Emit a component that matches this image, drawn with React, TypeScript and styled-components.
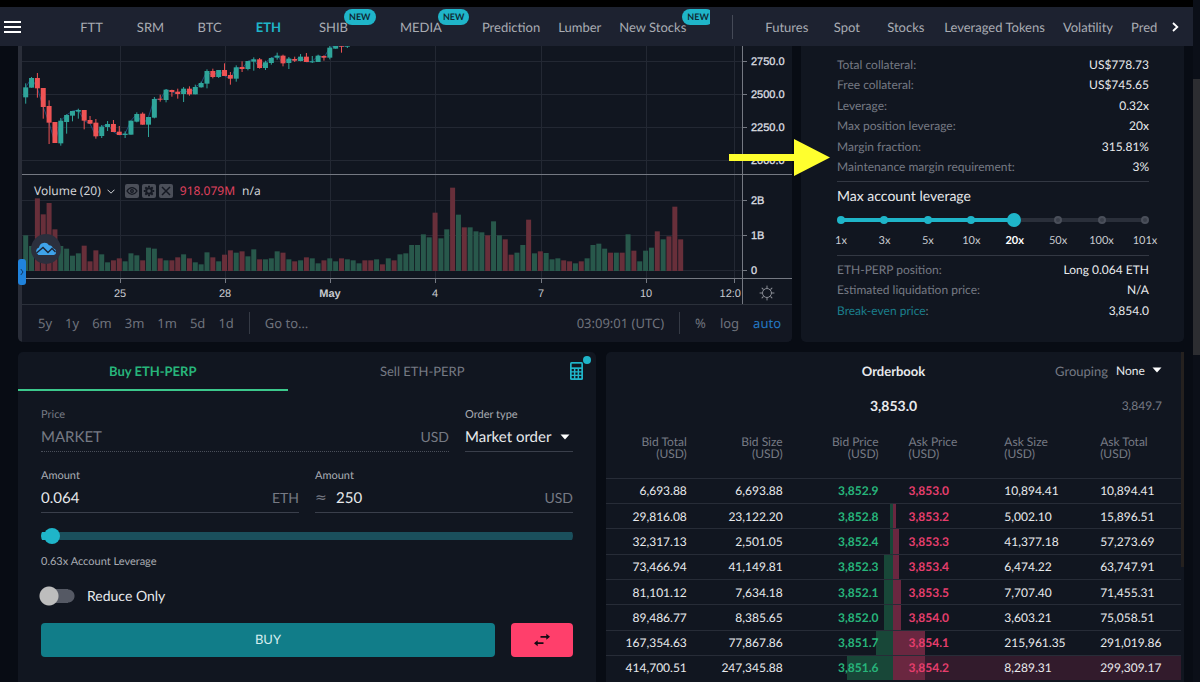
import React from "react";
import styled, { createGlobalStyle, css } from "styled-components";

const color = {
  page: "#080c14",
  panel: "#111620",
  nav: "#1d2230",
  line: "#272c37",
  text: "#e8eaed",
  soft: "#a9acb3",
  muted: "#767a84",
  teal: "#1fb5c9",
  green: "#27b57b",
  red: "#e63e6d",
};

const GlobalStyle = createGlobalStyle`
  * { box-sizing: border-box; }
  body {
    margin: 0;
    height: 100vh;
    overflow: hidden;
    background: ${color.page};
    color: ${color.text};
    font-family: Lato, "Liberation Sans", sans-serif;
    font-size: 13px;
    text-rendering: geometricPrecision;
  }
  button, input, select { font: inherit; color: inherit; text-rendering: inherit; }
`;

/* ---------- page frame ---------- */

const Page = styled.div`
  display: grid;
  grid-template-columns: minmax(0, 1fr) 7px;
  min-height: 100vh;
`;

const Content = styled.div`
  display: flex;
  flex-direction: column;
  border-top: 7px solid #000;
`;

const ScrollRail = styled.div`
  padding-top: 79px;
  background: #0b0f18;
`;

const ScrollThumb = styled.div`
  height: 276px;
  background: #2c2d31;
`;

const Panels = styled.main`
  flex: 1;
  display: flex;
  flex-direction: column;
  gap: 10px;
  padding: 0 9px 0 18px;
`;

const TopRow = styled.div`
  display: grid;
  grid-template-columns: minmax(0, 774fr) minmax(0, 383fr);
  gap: 9px;
`;

const BottomRow = styled.div`
  flex: 1;
  display: grid;
  grid-template-columns: minmax(0, 578fr) minmax(0, 578fr);
  gap: 10px;
`;

/* ---------- navigation ---------- */

const Nav = styled.nav`
  display: flex;
  align-items: center;
  height: 39px;
  background: ${color.nav};
`;

const IconButton = styled.button`
  display: flex;
  align-items: center;
  justify-content: center;
  padding: 0;
  border: 0;
  background: none;
  cursor: pointer;
`;

const MenuButton = styled(IconButton)`
  width: 24px;
  height: 39px;
`;

const NavGroup = styled.div<{ $grow?: boolean }>`
  display: flex;
  align-items: center;
  height: 39px;
  min-width: 0;
  overflow: hidden;
  ${(p) => (p.$grow ? css`flex: 1; padding-left: 23px;` : css`flex: none; padding: 0 15px 0 38px;`)}
`;

const NavLink = styled.a<{ $active?: boolean; $spaced?: boolean }>`
  flex: none;
  min-width: 59px;
  padding: 0 9px;
  margin: ${(p) => (p.$spaced ? "0 22px 0 6px" : "0")};
  color: ${(p) => (p.$active ? color.teal : color.soft)};
  font-weight: ${(p) => (p.$active ? 700 : 400)};
  line-height: 20px;
  text-align: center;
  text-decoration: none;
  white-space: nowrap;
`;

const NavName = styled.span`
  position: relative;
`;

const NewBadge = styled.span`
  position: absolute;
  top: -10px;
  left: calc(100% - 4px);
  padding: 0 5px;
  border-radius: 8px;
  background: ${color.teal};
  color: #0f2a35;
  font-size: 9px;
  font-weight: 700;
  line-height: 16px;
`;

const NavDivider = styled.div`
  width: 1px;
  height: 24px;
  margin-left: 22px;
  background: #454a57;
`;

const NextButton = styled(IconButton)`
  width: 36px;
  height: 39px;
`;

/* ---------- chart ---------- */

const ChartPanel = styled.section`
  position: relative;
  border-left: 4px solid #2a2e39;
  border-radius: 0 0 5px 5px;
  background: ${color.panel};
`;

const ChartSvg = styled.svg`
  display: block;
  width: 100%;
  aspect-ratio: 770 / 258;
  font-family: "Liberation Sans", sans-serif;
  font-size: 11px;
`;

const Legend = styled.div`
  position: absolute;
  top: 137px;
  left: 12px;
  display: flex;
  align-items: center;
  gap: 7px;
  font-family: "Noto Sans", sans-serif;
  font-size: 12px;
  line-height: 16px;
  color: #d0d2d6;
`;

const LegendName = styled.span`
  display: flex;
  align-items: center;
  gap: 6px;
  margin-right: 3px;
`;

const LegendTools = styled.span`
  display: flex;
  gap: 3px;
`;

const LegendTool = styled(IconButton)`
  width: 14px;
  height: 14px;
  border-radius: 2px;
  background: #4b4f59;
`;

const LegendValue = styled.span`
  color: #e0425f;
`;

const CloudBadge = styled.div`
  position: absolute;
  top: 188px;
  left: 9px;
  display: flex;
  align-items: center;
  justify-content: center;
  width: 30px;
  height: 30px;
  border-radius: 50%;
  background: #2b2f3d;
`;

const DrawerHandle = styled(IconButton)`
  position: absolute;
  top: 213px;
  left: -4px;
  width: 8px;
  height: 26px;
  border-radius: 3px;
  background: #2083dc;
`;

const ChartToolbar = styled.div`
  display: flex;
  align-items: center;
  height: 38px;
  padding: 0 11px 2px 16px;
  border-top: 1px solid #2b303a;
  border-radius: 0 0 5px 0;
  background: #131722;
  font-family: "Noto Sans", sans-serif;
  font-size: 13px;
`;

const RangeGroup = styled.div<{ $gap: number }>`
  display: flex;
  align-items: center;
  gap: ${(p) => p.$gap}px;
`;

const ToolButton = styled.button<{ $active?: boolean }>`
  padding: 0;
  border: 0;
  background: none;
  color: ${(p) => (p.$active ? "#2378c4" : "#6f737d")};
  line-height: 20px;
  cursor: pointer;
`;

const ToolDivider = styled.div`
  width: 1px;
  height: 22px;
  margin: 0 15px;
  background: #353a45;
`;

const Spacer = styled.div`
  flex: 1;
`;

/* ---------- account panel ---------- */

const AccountPanel = styled.section`
  position: relative;
  display: flex;
  flex-direction: column;
  padding: 8px 35px 0 36px;
  border-radius: 0 0 5px 5px;
  background: ${color.panel};
`;

const PointerArrow = styled.svg`
  position: absolute;
  top: 93px;
  left: -72px;
  width: 101px;
  height: 37px;
`;

const Facts = styled.dl<{ $height: number }>`
  display: grid;
  grid-auto-rows: 1fr;
  height: ${(p) => p.$height}px;
  margin: 0;
  font-size: 12px;
`;

const Fact = styled.div`
  display: flex;
  align-items: center;
  justify-content: space-between;
`;

const FactName = styled.dt`
  color: ${color.muted};
`;

const FactLink = styled.a`
  color: #1b7f8c;
  text-decoration: none;
`;

const FactValue = styled.dd`
  margin: 0;
`;

const LeverageBox = styled.div`
  margin: 4px 0 3px;
  padding: 4px 0 5px;
  border-top: 1px solid #333843;
  border-bottom: 1px solid #333843;
`;

const LeverageTitle = styled.label`
  display: block;
  font-size: 14px;
  line-height: 20px;
`;

const StepSlider = styled.div`
  display: grid;
  align-items: center;
  height: 14px;
  margin: 7px 0 5px;
  > * { grid-area: 1 / 1; }
`;

const StepRail = styled.div`
  height: 4px;
  margin: 0 4px;
  background: linear-gradient(90deg, ${color.teal} 57%, #2a2f3a 57%);
`;

const Spread = styled.div`
  display: flex;
  justify-content: space-between;
`;

const StepDot = styled.span<{ $on: boolean }>`
  width: 8px;
  height: 8px;
  border-radius: 50%;
  border: ${(p) => (p.$on ? "0" : "2px solid #4a4f5a")};
  background: ${(p) => (p.$on ? color.teal : "#3a3f4a")};
`;

const StepInput = styled.input`
  appearance: none;
  width: 100%;
  height: 14px;
  margin: 0;
  background: none;
  &::-webkit-slider-thumb {
    appearance: none;
    width: 14px;
    height: 14px;
    border-radius: 50%;
    background: ${color.teal};
  }
`;

const StepLabel = styled.span<{ $on: boolean }>`
  display: flex;
  justify-content: center;
  width: 8px;
  font-size: 11px;
  line-height: 18px;
  font-weight: ${(p) => (p.$on ? 700 : 400)};
  color: ${(p) => (p.$on ? "#ffffff" : "#c9ccd1")};
`;

/* ---------- order form ---------- */

const FormPanel = styled.section`
  border-radius: 5px 5px 0 0;
  background: ${color.panel};
`;

const TabRow = styled.div`
  display: flex;
  height: 39px;
`;

const Tab = styled.button<{ $active?: boolean }>`
  flex: 1;
  padding: 0;
  border: 0;
  border-bottom: 2px solid ${(p) => (p.$active ? "#3cc98c" : "transparent")};
  background: none;
  color: ${(p) => (p.$active ? color.green : color.muted)};
  font-weight: ${(p) => (p.$active ? 700 : 400)};
  cursor: pointer;
`;

const CalcButton = styled(IconButton)`
  position: relative;
  width: 39px;
  height: 37px;
`;

const CalcDot = styled.span`
  position: absolute;
  top: 4px;
  right: 5px;
  width: 8px;
  height: 8px;
  border-radius: 50%;
  background: ${color.teal};
`;

const OrderForm = styled.form`
  padding: 15px 23px 0;
`;

const FieldRow = styled.div<{ $columns: string }>`
  display: grid;
  grid-template-columns: ${(p) => p.$columns};
  gap: 16px;
  margin-bottom: 15px;
`;

const Field = styled.div`
  min-width: 0;
`;

const FieldLabel = styled.label<{ $dim?: boolean }>`
  display: block;
  color: ${(p) => (p.$dim ? color.muted : color.soft)};
  font-size: 11px;
  line-height: 17px;
`;

const FieldBox = styled.div<{ $dotted?: boolean }>`
  display: flex;
  align-items: center;
  gap: 8px;
  height: 29px;
  border-bottom: 1px ${(p) => (p.$dotted ? "dotted #4a4f5a" : "solid #3a3f4b")};
  color: ${color.muted};
  font-size: 14px;
`;

const Unit = styled.span`
  padding-bottom: 2px;
`;

const ApproxSign = styled.span`
  width: 13px;
  font-family: "DejaVu Sans", sans-serif;
`;

const FieldInput = styled.input`
  flex: 1;
  min-width: 0;
  padding: 0;
  border: 0;
  background: none;
  color: ${color.text};
  font-size: 15px;
  &:disabled { color: ${color.muted}; }
`;

const Select = styled.select`
  appearance: none;
  padding: 0;
  border: 0;
  background: none;
  color: ${color.text};
`;

const OrderSelect = styled(Select)`
  font-size: 15px;
`;

const AmountSlider = styled.input`
  appearance: none;
  display: block;
  width: 100%;
  height: 16px;
  margin: 0;
  background: linear-gradient(90deg, ${color.teal} 10px, #1a4f5c 10px) center / 100% 8px no-repeat;
  clip-path: inset(0 round 8px);
  &::-webkit-slider-thumb {
    appearance: none;
    width: 16px;
    height: 16px;
    border-radius: 50%;
    background: ${color.teal};
  }
`;

const Hint = styled.p`
  margin: 9px 0 15px;
  color: ${color.soft};
  font-size: 11px;
  line-height: 18px;
`;

const SwitchLabel = styled.label`
  display: flex;
  align-items: center;
  gap: 12px;
  margin: 0 0 17px -2px;
  font-size: 14px;
  line-height: 20px;
`;

const Switch = styled.input`
  appearance: none;
  width: 36px;
  height: 20px;
  margin: 0;
  background:
    radial-gradient(circle at 10px 10px, #bdbdbd 9px, transparent 10px),
    radial-gradient(circle at 29px 10px, #555964 6px, transparent 7px),
    linear-gradient(#555964, #555964) 10px 3px / 19px 14px no-repeat;
`;

const Actions = styled.div`
  display: flex;
  gap: 16px;
`;

const BuyButton = styled.button`
  flex: 1;
  height: 34px;
  padding: 0 0 2px;
  border: 0;
  border-radius: 4px;
  background: #117d89;
  color: #d5edef;
  cursor: pointer;
`;

const SwapButton = styled(IconButton)`
  width: 62px;
  height: 34px;
  border-radius: 4px;
  background: #ff3f6b;
`;

/* ---------- order book ---------- */

const BookPanel = styled.section`
  display: grid;
  grid-template-columns: minmax(0, 1fr) 3px;
  border-radius: 5px 5px 0 0;
  background: ${color.panel};
`;

const BookScroll = styled.div`
  height: 215px;
  background: #25211f;
`;

const BookHead = styled.header`
  display: grid;
  grid-template-columns: 1fr auto 1fr;
  align-items: center;
  padding: 0 19px;
`;

const BookTitle = styled.h2`
  grid-column: 2;
  margin: 0;
  font-size: 13px;
  line-height: 38px;
`;

const Grouping = styled.div`
  display: flex;
  align-items: center;
  justify-content: flex-end;
  gap: 8px;
  color: ${color.muted};
`;

const GroupingSelectBox = styled.span`
  display: flex;
  align-items: center;
  gap: 7px;
  padding-bottom: 2px;
  color: ${color.text};
  font-size: 12px;
`;

const LastPrice = styled.strong`
  grid-column: 2;
  justify-self: center;
  font-size: 14px;
  line-height: 31px;
`;

const IndexPrice = styled.span`
  justify-self: end;
  color: ${color.muted};
  font-size: 12px;
`;

const BookTable = styled.table`
  width: 100%;
  height: 259px;
  border-collapse: collapse;
  table-layout: fixed;
  font-size: 12px;
`;

const HeadCell = styled.th<{ $ask: boolean }>`
  height: 57px;
  padding: ${(p) => (p.$ask ? "0 0 2px 15px" : "0 15px 2px 0")};
  color: ${color.muted};
  font-weight: 400;
  line-height: 12px;
  text-align: ${(p) => (p.$ask ? "left" : "right")};
`;

const BookRow = styled.tr`
  border-top: 1px solid ${color.line};
`;

const Cell = styled.td<{ $ask?: boolean; $marked?: boolean }>`
  padding: ${(p) => (p.$ask ? "0 0 0 15px" : "0 15px 0 0")};
  text-align: ${(p) => (p.$ask ? "left" : "right")};
  background-color: ${(p) => (p.$marked ? "#321b2c" : "transparent")};
`;

const PriceCell = styled(Cell)<{ $depth: number }>`
  color: ${(p) => (p.$ask ? color.red : color.green)};
  font-weight: 700;
  background-image: ${(p) =>
    p.$ask ? "linear-gradient(#6a2740, #6a2740)" : "linear-gradient(#184738, #184738)"};
  background-position: ${(p) => (p.$ask ? "left" : "right")};
  background-size: ${(p) => p.$depth}px 100%;
  background-repeat: no-repeat;
`;

/* ---------- data ---------- */

// high, body top, body bottom, low (thirds of a pixel from the window top), 1 = rising
const candles = [
  [250, 262, 292, 311, 1], [231, 234, 263, 263, 1], [219, 234, 265, 293, 0], [264, 264, 321, 356, 0],
  [301, 318, 368, 432, 0], [366, 366, 429, 429, 0], [354, 362, 430, 437, 1], [343, 345, 366, 401, 1],
  [333, 333, 347, 364, 1], [326, 330, 335, 356, 1], [330, 330, 362, 388, 0], [348, 360, 371, 371, 0],
  [357, 368, 409, 416, 0], [375, 380, 408, 414, 1], [363, 372, 381, 393, 1], [360, 372, 396, 396, 0],
  [378, 395, 405, 405, 0], [394, 401, 405, 414, 1], [362, 362, 404, 404, 1], [337, 342, 365, 367, 1],
  [337, 341, 374, 374, 0], [351, 351, 374, 411, 1], [291, 297, 353, 355, 1], [284, 296, 299, 305, 0],
  [267, 269, 300, 307, 1], [269, 270, 276, 290, 0], [266, 275, 282, 296, 0], [261, 266, 282, 306, 1],
  [259, 266, 283, 287, 0], [254, 261, 283, 283, 1], [245, 249, 262, 263, 1], [208, 213, 251, 265, 1],
  [206, 213, 231, 235, 0], [210, 210, 231, 234, 1], [190, 210, 228, 228, 0], [216, 225, 236, 254, 0],
  [196, 202, 236, 245, 1], [184, 201, 207, 216, 0], [183, 183, 207, 211, 1], [172, 178, 185, 212, 1],
  [174, 178, 204, 206, 0], [182, 187, 204, 210, 1], [172, 174, 189, 194, 1], [158, 167, 173, 179, 1],
  [164, 167, 190, 199, 0], [171, 176, 189, 207, 1], [170, 177, 182, 186, 0], [162, 170, 183, 184, 1],
  [159, 170, 186, 186, 0], [168, 184, 187, 189, 1], [164, 167, 186, 186, 1], [166, 168, 173, 182, 0],
  [137, 143, 173, 178, 1], [137, 137, 146, 146, 1], [137, 137, 140, 158, 0], [137, 137, 140, 144, 1],
];

// height in thirds of a pixel; negative values are falling candles
const volumes = [
  107, 75, -218, -170, -204, -125, 75, 67, 46, 53, -76, -29, -62, 50, 26, -32, -38, 29, 53, 47, -32, 70, 67,
  -38, 32, -32, -41, 50, -38, 26, 20, 56, -41, 29, -49, -62, 55, -59, 44, 65, -35, 35, 38, 59, -55, 35, -29,
  32, -41, 38, 23, -32, 38, 29, -38, 35, 32, 23, -32, -32, 35, -20, 38, -32, 50, 53, 78, 78, 110, 101, -175,
  98, 125, -250, 169, -131, 131, 119, 116, -107, 149, 107, -95, -49, 55, 78, -154, 53, -59, 54, 35, 38, -32,
  -29, 23, -29, 38, 78, 82, 67, -55, 55, -55, 110, -61, 29, 61, 70, -119, 95, -104, -193, -95,
];

const slot = (i: number) => 3.7 + 5.848 * i;
const priceTicks: [string, number][] = [["2750.0", 15], ["2500.0", 48], ["2250.0", 81], ["2000.0", 114], ["2B", 154], ["1B", 189], ["0", 224]];
const timeTicks: [string, number][] = [["25", 98], ["28", 203], ["May", 308], ["4", 413], ["7", 519], ["10", 624]];

const marketsLeft: { name: string; active?: boolean; isNew?: boolean; spaced?: boolean }[] = [
  { name: "FTT" }, { name: "SRM" }, { name: "BTC" }, { name: "ETH", active: true },
  { name: "SHIB", isNew: true, spaced: true }, { name: "MEDIA", isNew: true, spaced: true },
  { name: "Prediction" }, { name: "Lumber" }, { name: "New Stocks", isNew: true },
];
const marketsRight = ["Futures", "Spot", "Stocks", "Leveraged Tokens", "Volatility", "Prediction"];

const accountFacts = [
  ["Total collateral:", "US$778.73"], ["Free collateral:", "US$745.65"], ["Leverage:", "0.32x"],
  ["Max position leverage:", "20x"], ["Margin fraction:", "315.81%"], ["Maintenance margin requirement:", "3%"],
];
const leverageSteps = ["1x", "3x", "5x", "10x", "20x", "50x", "100x", "101x"];

const bookColumns = ["Bid Total", "Bid Size", "Bid Price", "Ask Price", "Ask Size", "Ask Total"];
const book: { cells: string[]; bid: number; ask: number; marked?: boolean }[] = [
  { cells: ["6,693.88", "6,693.88", "3,852.9", "3,853.0", "10,894.41", "10,894.41"], bid: 0, ask: 0 },
  { cells: ["29,816.08", "23,122.20", "3,852.8", "3,853.2", "5,002.10", "15,896.51"], bid: 3, ask: 3 },
  { cells: ["32,317.13", "2,501.05", "3,852.4", "3,853.3", "41,377.18", "57,273.69"], bid: 3, ask: 6 },
  { cells: ["73,466.94", "41,149.81", "3,852.3", "3,853.4", "6,474.22", "63,747.91"], bid: 9, ask: 6 },
  { cells: ["81,101.12", "7,634.18", "3,852.1", "3,853.5", "7,707.40", "71,455.31"], bid: 9, ask: 8 },
  { cells: ["89,486.77", "8,385.65", "3,852.0", "3,854.0", "3,603.21", "75,058.51"], bid: 9, ask: 8 },
  { cells: ["167,354.63", "77,867.86", "3,851.7", "3,854.1", "215,961.35", "291,019.86"], bid: 17, ask: 32 },
  { cells: ["414,700.51", "247,345.88", "3,851.6", "3,854.2", "8,289.31", "299,309.17"], bid: 46, ask: 32, marked: true },
];

/* ---------- pieces ---------- */

const Caret = () => (
  <svg width="10" height="6" viewBox="0 0 10 6" aria-hidden="true">
    <path d="M0.5 0.5h9L5 5.5z" fill="#ffffff" />
  </svg>
);

function Chart() {
  return (
    <ChartSvg viewBox="0 0 770 258" role="img" aria-label="ETH-PERP price and volume">
      <g fill="#232833" shapeRendering="crispEdges">
        {timeTicks.map(([t, x]) => <rect key={t} x={x} y="0" width="1" height="232" />)}
        <rect x="712" y="0" width="1" height="232" />
        {priceTicks.map(([t, y]) => <rect key={t} x="0" y={y} width="721" height="1" />)}
      </g>
      <polyline
        fill="none"
        stroke="#1f4a78"
        points={candles.map((c, i) => `${slot(i)},${(c[4] ? c[1] : c[2]) / 3 - 46}`).join(" ")}
      />
      {candles.map(([high, top, bottom, low, up], i) => (
        <g key={i} fill={up ? "#2fa59a" : "#ee5354"}>
          <rect x={slot(i) - 0.5} y={high / 3 - 46} width="1" height={(low - high) / 3} />
          <rect x={slot(i) - 2.5} y={top / 3 - 46} width="5" height={(bottom - top) / 3} />
        </g>
      ))}
      {volumes.map((v, i) => (
        <rect
          key={i}
          x={slot(i) - 2.5}
          y={225 - Math.abs(v) / 3}
          width="5"
          height={Math.abs(v) / 3}
          fill={v > 0 ? "#28584b" : "#682f3a"}
        />
      ))}
      <g fill="#757982" shapeRendering="crispEdges">
        <rect x="0" y="128" width="770" height="1" />
        <rect x="0" y="232" width="770" height="1" />
        <rect x="720" y="0" width="1" height="258" />
        {priceTicks.map(([t, y]) => <rect key={t} x="721" y={y} width="4" height="1" />)}
        {timeTicks.map(([t, x]) => <rect key={t} x={x} y="233" width="1" height="4" />)}
        <rect x="712" y="233" width="1" height="4" />
      </g>
      <g fill="#dcdee1" stroke="#dcdee1" strokeWidth="0.3">
        {priceTicks.map(([t, y]) => <text key={t} x="729" y={y + 4}>{t}</text>)}
      </g>
      <g fill="#c8cacf" textAnchor="middle">
        {timeTicks.map(([t, x]) => (
          <text key={t} x={x} y="251" fontWeight={t === "May" ? 700 : 400}>{t}</text>
        ))}
        <text x="719" y="251" textAnchor="end">12:0</text>
      </g>
      <g fill="none" stroke="#8a8d95" strokeLinecap="round" transform="translate(745 247)">
        <circle r="4.5" />
        {[0, 45, 90, 135, 180, 225, 270, 315].map((a) => (
          <path key={a} d="M0 -5.2V-7" transform={`rotate(${a})`} />
        ))}
      </g>
    </ChartSvg>
  );
}

function LegendBar() {
  return (
    <Legend>
      <LegendName>
        Volume (20)
        <svg width="8" height="5" viewBox="0 0 8 5" fill="none" stroke="#d0d2d6" aria-hidden="true">
          <path d="M0.5 0.7L4 4.2L7.5 0.7" />
        </svg>
      </LegendName>
      <LegendTools>
        <LegendTool type="button" aria-label="Hide">
          <svg width="12" height="12" viewBox="0 0 12 12" fill="none" stroke="#141822" strokeWidth="1.3">
            <path d="M1 6C2.6 3.6 4.2 2.7 6 2.7S9.4 3.6 11 6C9.4 8.4 7.8 9.3 6 9.3S2.6 8.4 1 6z" />
            <circle cx="6" cy="6" r="1.3" />
          </svg>
        </LegendTool>
        <LegendTool type="button" aria-label="Settings">
          <svg width="12" height="12" viewBox="-6 -6 12 12" fill="none" stroke="#141822">
            <circle r="2.8" strokeWidth="2" />
            {[0, 45, 90, 135, 180, 225, 270, 315].map((a) => (
              <path key={a} d="M0 -3.5V-5.2" strokeWidth="2" transform={`rotate(${a})`} />
            ))}
          </svg>
        </LegendTool>
        <LegendTool type="button" aria-label="Remove">
          <svg width="12" height="12" viewBox="0 0 12 12" stroke="#141822" strokeWidth="1.5">
            <path d="M2 2L10 10M10 2L2 10" />
          </svg>
        </LegendTool>
      </LegendTools>
      <LegendValue>918.079M</LegendValue>
      <span>n/a</span>
    </Legend>
  );
}

function AccountInfo() {
  return (
    <AccountPanel>
      <Facts $height={123}>
        {accountFacts.map(([name, value]) => (
          <Fact key={name}>
            <FactName>{name}</FactName>
            <FactValue>{value}</FactValue>
          </Fact>
        ))}
      </Facts>
      <LeverageBox>
        <LeverageTitle htmlFor="leverage">Max account leverage</LeverageTitle>
        <StepSlider>
          <StepRail />
          <Spread>
            {leverageSteps.map((s, i) => <StepDot key={s} $on={i <= 4} />)}
          </Spread>
          <StepInput id="leverage" type="range" min="0" max="7" defaultValue="4" />
        </StepSlider>
        <Spread>
          {leverageSteps.map((s, i) => <StepLabel key={s} $on={i === 4}>{s}</StepLabel>)}
        </Spread>
      </LeverageBox>
      <Facts $height={62}>
        <Fact>
          <FactName>ETH-PERP position:</FactName>
          <FactValue>Long 0.064 ETH</FactValue>
        </Fact>
        <Fact>
          <FactName>Estimated liquidation price:</FactName>
          <FactValue>N/A</FactValue>
        </Fact>
        <Fact>
          <FactName><FactLink href="#break-even">Break-even price</FactLink>:</FactName>
          <FactValue>3,854.0</FactValue>
        </Fact>
      </Facts>
      <PointerArrow viewBox="0 0 101 37" aria-hidden="true">
        <path d="M0 15H65V0L101 18.5L65 37V22H0z" fill="#ffff2e" />
      </PointerArrow>
    </AccountPanel>
  );
}

function OrderPanel() {
  return (
    <FormPanel>
      <TabRow>
        <Tab type="button" $active>Buy ETH-PERP</Tab>
        <Tab type="button">Sell ETH-PERP</Tab>
        <CalcButton type="button" aria-label="Calculator">
          <svg width="13" height="18" viewBox="0 0 13 18" aria-hidden="true">
            <rect width="13" height="18" rx="1.5" fill={color.teal} />
            <g fill={color.panel}>
              <rect x="1.7" y="1.7" width="9.6" height="3.6" />
              {[7, 10.5, 14].map((y) => [1.7, 5.4, 9.1].map((x) => (
                <rect key={`${x}-${y}`} x={x} y={y} width="2.2" height="2.2" />
              )))}
            </g>
          </svg>
          <CalcDot />
        </CalcButton>
      </TabRow>
      <OrderForm onSubmit={(e) => e.preventDefault()}>
        <FieldRow $columns="minmax(0, 1fr) 108px">
          <Field>
            <FieldLabel htmlFor="price" $dim>Price</FieldLabel>
            <FieldBox $dotted>
              <FieldInput id="price" defaultValue="MARKET" disabled />
              <Unit>USD</Unit>
            </FieldBox>
          </Field>
          <Field>
            <FieldLabel htmlFor="order-type">Order type</FieldLabel>
            <FieldBox>
              <OrderSelect id="order-type"><option>Market order</option></OrderSelect>
              <Caret />
            </FieldBox>
          </Field>
        </FieldRow>
        <FieldRow $columns="minmax(0, 1fr) minmax(0, 1fr)">
          <Field>
            <FieldLabel htmlFor="amount-eth">Amount</FieldLabel>
            <FieldBox>
              <FieldInput id="amount-eth" defaultValue="0.064" />
              <Unit>ETH</Unit>
            </FieldBox>
          </Field>
          <Field>
            <FieldLabel htmlFor="amount-usd">Amount</FieldLabel>
            <FieldBox>
              <ApproxSign>≈</ApproxSign>
              <FieldInput id="amount-usd" defaultValue="250" />
              <Unit>USD</Unit>
            </FieldBox>
          </Field>
        </FieldRow>
        <AmountSlider type="range" aria-label="Order size" min="0" max="200" defaultValue="1" />
        <Hint>0.63x Account Leverage</Hint>
        <SwitchLabel>
          <Switch type="checkbox" role="switch" />
          Reduce Only
        </SwitchLabel>
        <Actions>
          <BuyButton type="submit">BUY</BuyButton>
          <SwapButton type="button" aria-label="Switch side">
            <svg width="16" height="14" viewBox="0 0 16 14" fill="none" stroke="#160c14" strokeWidth="1.7" aria-hidden="true">
              <path d="M6.5 3.8H14M1.5 10.2H9.5" />
              <path d="M12.3 0.8L16 3.8L12.3 6.8zM3.7 7.2L0 10.2L3.7 13.2z" fill="#160c14" stroke="none" />
            </svg>
          </SwapButton>
        </Actions>
      </OrderForm>
    </FormPanel>
  );
}

function Orderbook() {
  return (
    <BookPanel>
      <div>
        <BookHead>
          <BookTitle>Orderbook</BookTitle>
          <Grouping>
            <label htmlFor="grouping">Grouping</label>
            <GroupingSelectBox>
              <Select id="grouping"><option>None</option></Select>
              <Caret />
            </GroupingSelectBox>
          </Grouping>
          <LastPrice>3,853.0</LastPrice>
          <IndexPrice>3,849.7</IndexPrice>
        </BookHead>
        <BookTable>
          <thead>
            <tr>
              {bookColumns.map((c, i) => (
                <HeadCell key={c} $ask={i > 2}>{c}<br />(USD)</HeadCell>
              ))}
            </tr>
          </thead>
          <tbody>
            {book.map(({ cells, bid, ask, marked }) => (
              <BookRow key={cells[2]}>
                <Cell>{cells[0]}</Cell>
                <Cell>{cells[1]}</Cell>
                <PriceCell $depth={bid}>{cells[2]}</PriceCell>
                <PriceCell $ask $marked={marked} $depth={ask}>{cells[3]}</PriceCell>
                <Cell $ask $marked={marked}>{cells[4]}</Cell>
                <Cell $ask $marked={marked}>{cells[5]}</Cell>
              </BookRow>
            ))}
          </tbody>
        </BookTable>
      </div>
      <BookScroll />
    </BookPanel>
  );
}

export default function App() {
  return (
    <Page>
      <GlobalStyle />
      <Content>
        <Nav>
          <MenuButton type="button" aria-label="Menu">
            <svg width="17" height="12" viewBox="0 0 17 12" stroke="#ffffff" strokeWidth="2" aria-hidden="true">
              <path d="M0 1H17M0 6H17M0 11H17" />
            </svg>
          </MenuButton>
          <NavGroup>
            {marketsLeft.map((m) => (
              <NavLink key={m.name} href="#markets" $active={m.active} $spaced={m.spaced}>
                <NavName>
                  {m.name}
                  {m.isNew && <NewBadge>NEW</NewBadge>}
                </NavName>
              </NavLink>
            ))}
          </NavGroup>
          <NavDivider />
          <NavGroup $grow>
            {marketsRight.map((m) => <NavLink key={m} href="#markets">{m}</NavLink>)}
          </NavGroup>
          <NextButton type="button" aria-label="More markets">
            <svg width="7" height="10" viewBox="0 0 7 10" fill="none" stroke="#ffffff" strokeWidth="1.8" aria-hidden="true">
              <path d="M1 1L5.3 5L1 9" />
            </svg>
          </NextButton>
        </Nav>
        <Panels>
          <TopRow>
            <ChartPanel>
              <Chart />
              <LegendBar />
              <CloudBadge>
                <svg width="24" height="14" viewBox="0 0 24 14" aria-hidden="true">
                  <path d="M4.5 13A4 4 0 0 1 5 5.5A5.5 5.5 0 0 1 15 3.2A4.5 4.5 0 0 1 19 6.3A3.5 3.5 0 0 1 20 13z" fill="#3fa3ea" />
                  <path d="M2.5 11L9 5.5L14 10.5L18 6.5L21.5 10" fill="none" stroke="#1b2536" strokeWidth="1.4" />
                </svg>
              </CloudBadge>
              <DrawerHandle type="button" aria-label="Show drawing tools">
                <svg width="4" height="8" viewBox="0 0 4 8" fill="none" stroke="#123a63" aria-hidden="true">
                  <path d="M0.8 1L3 4L0.8 7" />
                </svg>
              </DrawerHandle>
              <ChartToolbar>
                <RangeGroup $gap={13}>
                  {["5y", "1y", "6m", "3m", "1m", "5d", "1d"].map((r) => (
                    <ToolButton key={r} type="button">{r}</ToolButton>
                  ))}
                </RangeGroup>
                <ToolDivider />
                <ToolButton type="button">Go to…</ToolButton>
                <Spacer />
                <ToolButton type="button">03:09:01 (UTC)</ToolButton>
                <ToolDivider />
                <RangeGroup $gap={14}>
                  <ToolButton type="button">%</ToolButton>
                  <ToolButton type="button">log</ToolButton>
                  <ToolButton type="button" $active>auto</ToolButton>
                </RangeGroup>
              </ChartToolbar>
            </ChartPanel>
            <AccountInfo />
          </TopRow>
          <BottomRow>
            <OrderPanel />
            <Orderbook />
          </BottomRow>
        </Panels>
      </Content>
      <ScrollRail>
        <ScrollThumb />
      </ScrollRail>
    </Page>
  );
}
